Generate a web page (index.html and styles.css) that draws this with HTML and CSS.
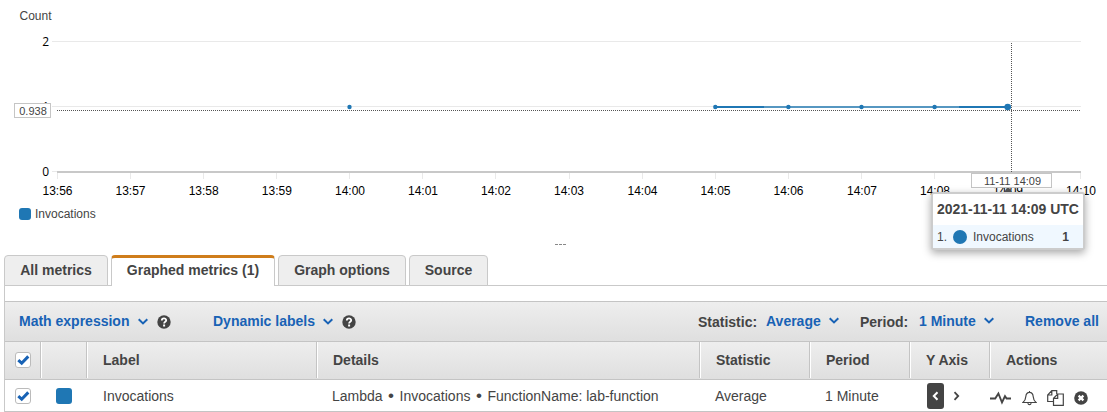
FILE: index.html
```html
<!DOCTYPE html>
<html lang="en">
<head>
<meta charset="utf-8">
<title>Metrics</title>
<link rel="stylesheet" href="styles.css">
</head>
<body>
<main class="page">
  <section class="chart">
    <svg class="plot" width="1107" height="205" viewBox="0 0 1107 205">
      <text class="unit" x="19.5" y="20">Count</text>
      <g class="grid">
        <path d="M52 41.5H1081M52 106.5H1081M52 171.5H57"/>
        <path d="M57.5 173V179M130.5 173V179M203.5 173V179M276.5 173V179M349.5 173V179M422.5 173V179M495.5 173V179M569.5 173V179M642.5 173V179M715.5 173V179M788.5 173V179M861.5 173V179M934.5 173V179M1008.5 173V179M1080.5 173V179"/>
      </g>
      <path class="axis" d="M57 172H1081"/>
      <g class="ylabels">
        <text x="49" y="46">2</text>
        <text x="49" y="111">1</text>
        <text x="49" y="176">0</text>
      </g>
      <g class="xlabels">
        <text x="57.5" y="195">13:56</text>
        <text x="130.5" y="195">13:57</text>
        <text x="203.7" y="195">13:58</text>
        <text x="276.8" y="195">13:59</text>
        <text x="350" y="195">14:00</text>
        <text x="423" y="195">14:01</text>
        <text x="496" y="195">14:02</text>
        <text x="569" y="195">14:03</text>
        <text x="642.5" y="195">14:04</text>
        <text x="715.5" y="195">14:05</text>
        <text x="788.5" y="195">14:06</text>
        <text x="862" y="195">14:07</text>
        <text x="935" y="195">14:08</text>
        <text x="1008" y="195">14:09</text>
        <text x="1081" y="195">14:10</text>
      </g>
      <path class="cross" d="M57 110.5H1080M1011.5 43V173"/>
      <path class="series" d="M715 107H764M959 107H1008"/>
      <path class="series light" d="M764 107H959"/>
      <g class="dots">
        <circle cx="349.5" cy="107" r="2.2"/>
        <circle cx="715.3" cy="107" r="2.2"/>
        <circle cx="788.4" cy="107" r="2.2"/>
        <circle cx="861.5" cy="107" r="2.2"/>
        <circle cx="934.6" cy="107" r="2.2"/>
        <circle cx="1007.7" cy="107" r="3.3"/>
      </g>
      <path class="marker" d="M1008 186L1013 194H1003Z"/>
      <rect class="flag" x="14.5" y="103.5" width="36" height="14"/>
      <text class="flagtext" x="33" y="115">0.938</text>
      <rect class="flag" x="971.5" y="173.5" width="80" height="14"/>
      <text class="flagtext" x="1012.5" y="185">11-11 14:09</text>
    </svg>
    <div class="legend"><span class="legend-swatch"></span>Invocations</div>
    <aside class="tooltip">
      <div class="tip-title">2021-11-11 14:09 UTC</div>
      <div class="tip-row"><span class="tip-index">1.</span><span class="tip-dot"></span><span>Invocations</span><b class="tip-value">1</b></div>
    </aside>
  </section>
  <div class="grip"><i></i><i></i><i></i></div>

  <nav class="tabs">
    <div class="tab tab-all"><span>All metrics</span></div>
    <div class="tab tab-graphed active"><span>Graphed metrics (1)</span></div>
    <div class="tab tab-options"><span>Graph options</span></div>
    <div class="tab tab-source"><span>Source</span></div>
  </nav>

  <section class="panel">
    <div class="toolbar">
      <span class="link math">Math expression</span>
      <svg class="chev" width="10" height="7" viewBox="0 0 10 7"><path d="M.7 1.2L5 5.4L9.3 1.2"/></svg>
      <svg class="help" width="14" height="14" viewBox="0 0 14 14"><circle cx="7" cy="7" r="6.7"/><path d="M4.8 5.4C4.8 2.7 9.2 2.7 9.2 5.3C9.2 6.8 7.1 6.7 7.1 8.5"/><rect x="6.1" y="9.5" width="2" height="2"/></svg>
      <span class="link dynamic">Dynamic labels</span>
      <svg class="chev" width="10" height="7" viewBox="0 0 10 7"><path d="M.7 1.2L5 5.4L9.3 1.2"/></svg>
      <svg class="help" width="14" height="14" viewBox="0 0 14 14"><circle cx="7" cy="7" r="6.7"/><path d="M4.8 5.4C4.8 2.7 9.2 2.7 9.2 5.3C9.2 6.8 7.1 6.7 7.1 8.5"/><rect x="6.1" y="9.5" width="2" height="2"/></svg>
      <div class="selectors">
        <span class="field stat-name">Statistic:</span>
        <span class="link stat-value">Average</span>
        <svg class="chev" width="10" height="7" viewBox="0 0 10 7"><path d="M.7 1.2L5 5.4L9.3 1.2"/></svg>
        <span class="field period-name">Period:</span>
        <span class="link period-value">1 Minute</span>
        <svg class="chev" width="10" height="7" viewBox="0 0 10 7"><path d="M.7 1.2L5 5.4L9.3 1.2"/></svg>
        <span class="link remove">Remove all</span>
      </div>
    </div>
    <div class="row head">
      <div class="cell check"><span class="box"><svg width="13" height="12" viewBox="0 0 13 12"><path d="M1.3 6.2L4.7 9.2L11.3 2.4"/></svg></span></div>
      <div class="cell"></div>
      <div class="cell">Label</div>
      <div class="cell">Details</div>
      <div class="cell">Statistic</div>
      <div class="cell">Period</div>
      <div class="cell">Y Axis</div>
      <div class="cell">Actions</div>
    </div>
    <div class="row body">
      <div class="cell check"><span class="box"><svg width="13" height="12" viewBox="0 0 13 12"><path d="M1.3 6.2L4.7 9.2L11.3 2.4"/></svg></span></div>
      <div class="cell color"><span class="swatch"></span></div>
      <div class="cell">Invocations</div>
      <div class="cell details">Lambda<span class="sep">•</span>Invocations<span class="sep">•</span>FunctionName: lab-function</div>
      <div class="cell stat">Average</div>
      <div class="cell period">1 Minute</div>
      <div class="cell yaxis">
        <span class="left"><svg width="7" height="10" viewBox="0 0 7 10"><path d="M5.5 1.2L1.8 5L5.5 8.8"/></svg></span>
        <svg class="right" width="7" height="10" viewBox="0 0 7 10"><path d="M1.5 1.2L5.2 5L1.5 8.8"/></svg>
      </div>
      <div class="cell actions">
        <svg class="icon pulse" width="21" height="14" viewBox="0 0 21 14"><path d="M0 7.5H5.2L8.4 2.5L12 11.5L15 5.2L16.6 7.5H21"/></svg>
        <svg class="icon bell" width="15" height="16" viewBox="0 0 16 16"><path d="M8 .5V2M8 2C5.2 2 4.3 4 4.1 6.3C3.9 9.2 3.2 11.2 1 12.8H15C12.8 11.2 12.1 9.2 11.9 6.3C11.7 4 10.8 2 8 2ZM6.3 13.3C6.5 15.7 9.5 15.7 9.7 13.3"/></svg>
        <svg class="icon copy" width="17" height="16" viewBox="0 0 17 16"><path d="M6.5 11.5H.7V5L4.8 .7H9.7V4M4.8 .7V5H.7M6.5 15.3V8.3L10.7 4H16.3V15.3ZM10.7 4V8.3H6.5"/></svg>
        <svg class="icon close" width="14" height="14" viewBox="0 0 14 14"><circle cx="7" cy="7" r="6.8"/><path d="M4.6 4.6L9.4 9.4M9.4 4.6L4.6 9.4"/></svg>
      </div>
    </div>
  </section>
</main>
</body>
</html>
```
FILE: styles.css
```css
* { box-sizing: border-box; }
body { margin: 0; background: #fff; color: #444; font: 14px "Liberation Sans", Arial, sans-serif; overflow: hidden; }
svg { display: block; flex: none; }
.page { width: 1107px; height: 412px; overflow: hidden; }

.chart { position: relative; height: 242px; }
.unit { font-size: 12px; fill: #444; }
.grid path { stroke: #e9e9e9; fill: none; }
.axis { stroke: #c8c8c8; stroke-width: 2; }
.ylabels { font: 12px "Open Sans", sans-serif; text-anchor: end; fill: #000; }
.xlabels { font-size: 12px; text-anchor: middle; fill: #000; }
.cross { stroke: #555; stroke-dasharray: 1 1; fill: none; }
.series { stroke: #1f77b4; stroke-width: 2; }
.series.light { stroke: #5697c1; }
.dots { fill: #1f77b4; }
.marker { fill: #555; }
.flag { fill: #fff; stroke: #c5c5c5; }
.flagtext { font-size: 11px; text-anchor: middle; fill: #444; }

.legend { display: flex; align-items: center; gap: 4px; height: 18px; padding-left: 19px; font-size: 12px; }
.legend-swatch { width: 12px; height: 12px; border-radius: 3px; background: #1f77b4; }

.tooltip { position: absolute; left: 931px; top: 192px; width: 154px; height: 58px; border: 2px solid #ccc; border-radius: 3px; background: #fff; box-shadow: 0 3px 9px rgba(0, 0, 0, .35); z-index: 2; }
.tip-title { height: 31px; padding-left: 4px; line-height: 31px; font-size: 14px; font-weight: bold; white-space: nowrap; letter-spacing: -.03px; }
.tip-row { display: flex; align-items: center; height: 23px; padding: 0 14px 0 4px; background: #f0f8ff; font-size: 12px; }
.tip-index { width: 16px; }
.tip-dot { width: 14px; height: 14px; margin-right: 6px; border-radius: 50%; background: #1f77b4; }
.tip-value { margin-left: auto; }

.grip { display: flex; justify-content: center; gap: 1px; height: 13px; padding: 2px 0 0 13px; }
.grip i { width: 3px; height: 1px; background: #888; }

.tabs { display: flex; height: 31px; padding-left: 4px; background: linear-gradient(#c9c9c9, #c9c9c9) 4px 100% / 100% 1px no-repeat; }
.tab { display: flex; justify-content: center; height: 31px; margin-right: 3px; border: 1px solid #c9c9c9; border-radius: 4px 4px 0 0; background: #eee; font-weight: bold; line-height: 29px; white-space: nowrap; }
.tab-all { width: 104px; }
.tab-graphed { width: 164px; }
.tab-options { width: 128px; }
.tab-source { width: 79px; }
.tab.active { border-top: 3px solid #cf7d1b; border-bottom: 0; background: #fff; line-height: 25px; }

.panel { margin-left: 4px; padding-top: 15px; border-left: 1px solid #c9c9c9; }
.toolbar { display: flex; height: 40px; padding-left: 14px; border-top: 1px solid #c4c4c4; background: linear-gradient(#eee, #dfdfdf); line-height: 39px; font-weight: bold; white-space: nowrap; }
.link { color: #1862b5; }
.math { width: 119px; }
.dynamic { width: 110px; margin-left: 42px; }
.chev { margin-top: 16px; fill: none; stroke: #1862b5; stroke-width: 2; }
.help { margin: 13px 0 0 9px; fill: #fff; }
.help circle { fill: #444; }
.help path { fill: none; stroke: #fff; stroke-width: 1.8; }
.selectors { display: flex; margin-left: auto; line-height: 38px; }
.selectors .chev { margin-top: 15px; }
.field { line-height: 41px; }
.stat-name { width: 68px; }
.stat-value { width: 63px; }
.period-name { width: 59px; margin-left: 21px; }
.period-value { width: 65px; }
.remove { width: 82px; margin-left: 31px; line-height: 39px; }

.row { display: grid; grid-template-columns: 36px 46px 230px 383px 110px 100px 80px 117px; }
.cell { display: flex; align-items: center; padding-left: 16px; white-space: nowrap; }
.head { height: 39px; padding-bottom: 1px; border-top: 1px solid #c4c4c4; border-bottom: 1px solid #c4c4c4; background: linear-gradient(#eee, #dfdfdf); font-weight: bold; }
.head .cell { border-right: 1px solid #c4c4c4; box-shadow: 1px 0 #fff; }
.head .cell:last-child { border: 0; box-shadow: none; }
.body { height: 32px; border-bottom: 1px solid #c4c4c4; }
.row .check { padding-left: 10px; }
.row .color { padding-left: 15px; }
.box { display: flex; align-items: center; justify-content: center; width: 16px; height: 16px; border: 1px solid #bbb; border-radius: 3px; background: #fff; }
.box path { fill: none; stroke: #1862b5; stroke-width: 3; }
.swatch { width: 16px; height: 16px; border-radius: 3px; background: #1f77b4; }
.row .details, .row .stat, .row .period { padding-left: 15px; }
.sep { width: 17px; text-align: center; font-size: 17px; line-height: 16px; }
.yaxis { padding-left: 17px; }
.left { display: flex; align-items: center; justify-content: center; width: 17px; height: 26px; border-radius: 3px; background: #444; }
.left path { fill: none; stroke: #fff; stroke-width: 2; }
.right { margin-left: 9px; }
.right path { fill: none; stroke: #444; stroke-width: 1.8; }
.row .actions { padding: 5px 0 0 0; }
.icon { fill: none; stroke: #444; stroke-width: 1.2; }
.pulse { stroke-width: 1.9; }
.bell { margin-left: 11px; }
.copy { margin-left: 10px; }
.close { margin-left: 10px; }
.close circle { fill: #444; stroke: none; }
.close path { stroke: #fff; stroke-width: 2.2; }
```
